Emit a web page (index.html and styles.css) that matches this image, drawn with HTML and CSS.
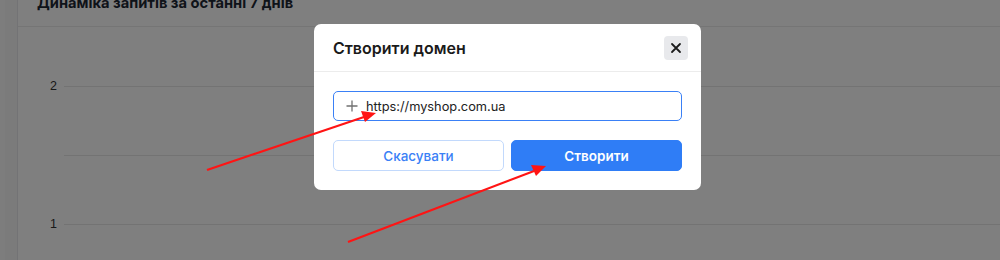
FILE: index.html
```html
<!DOCTYPE html>
<html lang="uk">
<head>
<meta charset="utf-8">
<link rel="stylesheet" href="styles.css">
</head>
<body>
<div class="page">
  <aside class="sidebar"></aside>
  <main class="main">
    <div class="card-head"><h2 class="card-title">Динаміка запитів за останні 7 днів</h2></div>
    <div class="chart">
      <div class="tick"><span class="tick-label">2</span><span class="tick-line"></span></div>
      <div class="tick"><span class="tick-label"></span><span class="tick-line"></span></div>
      <div class="tick"><span class="tick-label">1</span><span class="tick-line"></span></div>
    </div>
  </main>
</div>
<div class="overlay"></div>
<div class="modal">
  <div class="modal-head">
    <h3 class="modal-title">Створити домен</h3>
    <button class="close-btn" aria-label="close">
      <svg width="12" height="12" viewBox="0 0 12 12"><path d="M2 2L10 10M10 2L2 10" stroke="#1c1c1c" stroke-width="1.8" stroke-linecap="round"/></svg>
    </button>
  </div>
  <div class="modal-body">
    <div class="input">
      <svg class="plus" width="12" height="12" viewBox="0 0 12 12"><path d="M6 0.5V11.5M0.5 6H11.5" stroke="#707070" stroke-width="1.3"/></svg>
      <span class="input-text">https://myshop.com.ua</span>
    </div>
    <div class="actions">
      <button class="btn btn-outline">Скасувати</button>
      <button class="btn btn-primary">Створити</button>
    </div>
  </div>
</div>
<svg class="arrows" width="1000" height="260" viewBox="0 0 1000 260">
  <line x1="207" y1="170" x2="364" y2="117" stroke="#ff1414" stroke-width="2.2"/>
  <polygon points="376,113 361,111 365,122" fill="#ff1414"/>
  <line x1="348" y1="242" x2="534" y2="171" stroke="#ff1414" stroke-width="2.2"/>
  <polygon points="546,166 531,165 536,176" fill="#ff1414"/>
</svg>
</body>
</html>
```
FILE: styles.css
```css
* { box-sizing: border-box; }
html, body { margin: 0; padding: 0; }
body {
  width: 1000px;
  height: 260px;
  overflow: hidden;
  position: relative;
  background: #fff;
  font-family: Inter, "Noto Sans", sans-serif;
}
.page { display: flex; height: 260px; }
.sidebar {
  width: 18px;
  background: #f6f6f7;
  border-left: 5px solid #fbfbfb;
  border-right: 1px solid #e6e7ea;
}
.main { flex: 1; }
.card-head {
  height: 27px;
  border-bottom: 1px solid #ebebeb;
  padding-left: 19px;
  overflow: hidden;
}
.card-title {
  margin: -7px 0 0;
  font-size: 14.7px;
  font-weight: 700;
  color: #1d2633;
  line-height: 20px;
}
.chart {
  display: flex;
  flex-direction: column;
  gap: 49px;
  padding-top: 49px;
}
.tick { display: flex; align-items: center; height: 20px; }
.tick-label {
  width: 39px;
  text-align: right;
  font-family: "Liberation Sans", Arial, sans-serif;
  font-size: 12.5px;
  color: #333;
}
.tick-line { flex: 1; height: 1px; background: #e6e6e6; margin-left: 7px; }
.overlay {
  position: absolute;
  inset: 0;
  background: rgba(0, 0, 0, 0.5);
}
.modal {
  position: absolute;
  left: 314px;
  top: 24px;
  width: 387px;
  background: #fff;
  border-radius: 7px;
}
.modal-head {
  height: 48px;
  display: flex;
  align-items: center;
  justify-content: space-between;
  padding: 0 13px 0 19px;
  border-bottom: 1px solid #ececec;
}
.modal-title {
  margin: 0;
  font-size: 16px;
  font-weight: 600;
  color: #1a1a1a;
}
.close-btn {
  width: 24px;
  height: 24px;
  border: 0;
  border-radius: 4px;
  background: #e8e9ec;
  display: flex;
  align-items: center;
  justify-content: center;
  padding: 0;
}
.modal-body {
  padding: 19px;
  display: flex;
  flex-direction: column;
  gap: 19px;
}
.input {
  height: 30px;
  border: 1.6px solid #3a80f6;
  border-radius: 5px;
  display: flex;
  align-items: center;
  padding-left: 12px;
  gap: 8px;
}
.input-text { font-size: 12.8px; color: #222; }
.actions { display: flex; gap: 7px; }
.btn {
  flex: 1;
  height: 31px;
  border-radius: 5px;
  font-family: inherit;
  font-size: 13.5px;
  font-weight: 500;
}
.btn-outline { background: #fff; border: 1px solid #c2d9fc; color: #3a80f6; }
.btn-primary { background: #2f7df6; border: 1px solid #2f7df6; color: #fff; font-weight: 600; }
.arrows { position: absolute; left: 0; top: 0; pointer-events: none; }
```
